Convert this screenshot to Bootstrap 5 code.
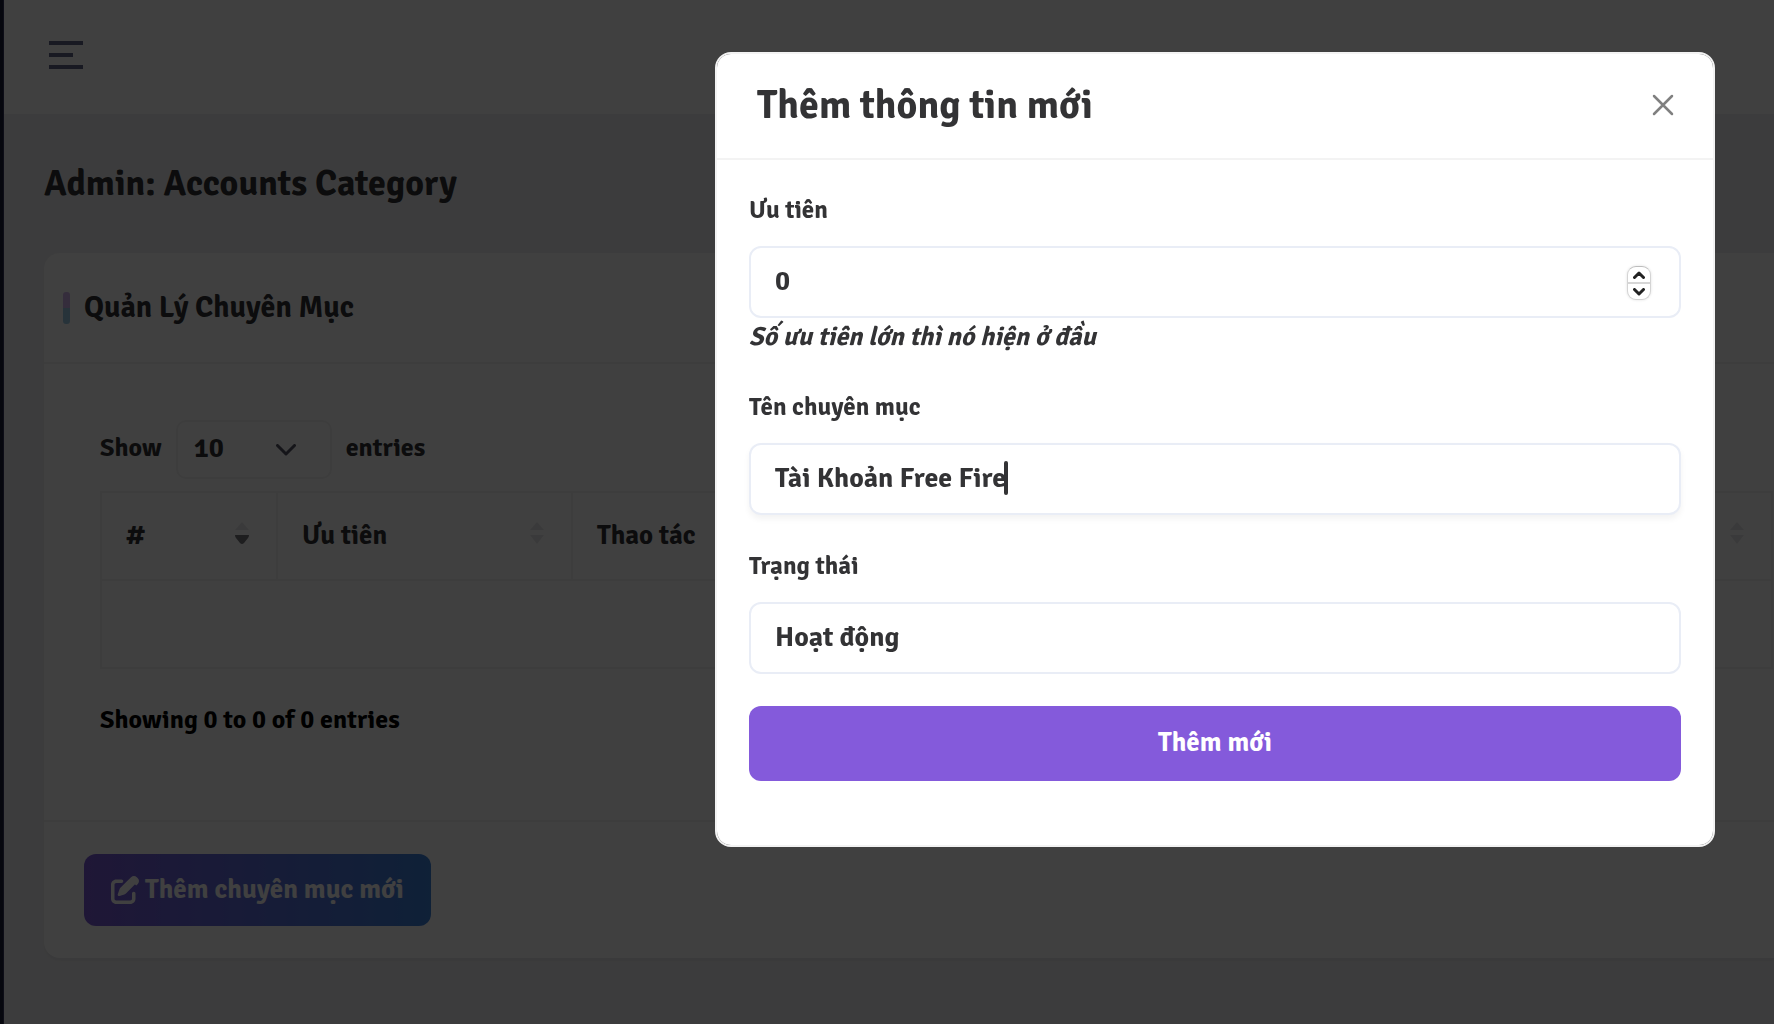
<!DOCTYPE html>
<html lang="vi">
<head>
<meta charset="utf-8">
<meta name="viewport" content="width=device-width, initial-scale=1">
<title>Admin: Accounts Category</title>
<link href="https://cdn.jsdelivr.net/npm/bootstrap@5.3.0/dist/css/bootstrap.min.css" rel="stylesheet">
<style>
  body { font-family: "Signika Negative", Roboto, "Noto Sans", sans-serif; font-size: 26px; font-weight: 700; line-height: 36px; color: #333335; background: #f0f0f2; overflow: hidden; }
  .side-edge { width: 4px; flex: none; background: #1a1c3a; border-right: 1px solid #34365c; }
  .top-bar { height: 114px; background: #fff; padding: 0 0 4px 45px; }
  .burger { border: 0; background: none; padding: 0; line-height: 0; }
  .page-main { padding-left: 40px; }
  .page-title { font-size: 36px; line-height: 43px; font-weight: 700; padding: 48px 0; }
  .panel { border: 0; border-radius: 16px 0 0 16px; box-shadow: 0 3px 2px #e6e6ea; color: inherit; }
  .panel-head { height: 111px; padding-left: 19px; border-bottom: 2px solid #f3f3f3; }
  .accent { width: 7px; height: 32px; border-radius: 3px; background: linear-gradient(#d4b4ee 50%, #9ccbe8 50%); }
  .panel-title { font-size: 30px; line-height: 36px; font-weight: 700; padding-left: 14px; }
  .panel-main { padding: 56px 0 82px 56px; }
  .panel-foot { padding: 32px 40px; border-top: 2px solid #f3f3f3; }
  .length-row { gap: 14px; }
  .length-select { width: 156px; height: 59px; padding: 0 0 4px 16px; border: 2px solid #f3f3f3; border-radius: 10px; font-weight: 700; font-size: 28px; color: inherit;
    background: #fff url("data:image/svg+xml,%3Csvg xmlns='http://www.w3.org/2000/svg' viewBox='0 0 20 12'%3E%3Cpath d='M1.500 1.500 10 10 18.500 1.500' fill='none' stroke='%23555566' stroke-width='3' stroke-linecap='round' stroke-linejoin='round'/%3E%3C/svg%3E") no-repeat right 34px center / 20px 12px; }
  .data-table { width: calc(100% - 1px); margin: 12px 0 0; table-layout: fixed; color: inherit; border: 2px solid #f3f3f3; }
  .data-table th, .data-table td { height: 88px; padding: 0 27px 0 24px; border: 2px solid #f3f3f3; color: inherit; font-size: 27px; font-weight: 700; vertical-align: middle; }
  .col-index { width: 176px; }
  .col-mid { width: 295px; }
  .sorter { width: 14px; height: 22px; margin-bottom: 6px; fill: #e8e8ea; }
  .sorter .active { fill: #77777c; }
  .table-info { padding-top: 33px; background: none; }
  .btn-add { height: 72px; padding: 0 25px; border: 2px solid transparent; border-radius: 12px; font-size: 27px; font-weight: 700; color: #fff; gap: 6px; background: linear-gradient(90deg, #7c5ad8, #3c82dc) border-box; }
  .btn-add svg { width: 28px; height: 28px; fill: currentColor; }

  .modal-backdrop { --bs-backdrop-opacity: .75; }
  .modal-dialog.dialog-wide { max-width: 1000px; margin: 52px 59px 52px auto; }
  .dialog-wide .modal-content { border: 2px solid #f3f3f3; border-radius: 16px; color: #333335; }
  .dialog-wide .modal-header { height: 106px; padding: 0 39px 2px 40px; border-bottom: 2px solid #f3f3f3; }
  .dialog-wide .modal-title { font-size: 40px; line-height: 48px; font-weight: 700; }
  .dialog-wide .modal-body { padding: 31px 32px 64px; }
  .close-x { border: 0; background: none; padding: 0; line-height: 0; }
  .field { margin-bottom: 32px; }
  .field .form-label { display: block; font-size: 25px; font-weight: 700; line-height: 37px; margin: 0 0 18px; }
  .field .form-control, .field .form-select { height: 72px; padding: 0 24px 2px; border: 2px solid #e9edf6; border-radius: 12px; font-size: 28px; font-weight: 700; color: #333335; background: #fff; box-shadow: none; }
  .field .focused { box-shadow: 0 4px 6px rgba(0,0,0,.05); }
  .field input[type=number] { appearance: textfield; }
  .hint { display: block; line-height: 38px; }
  .stepper { right: 30px; top: 20px; width: 24px; height: 34px; border: 1px solid #d4d4d4; border-top-color: #bdbdbd; border-radius: 9px; background: #fff; box-shadow: 0 0 3px rgba(0,0,0,.12); overflow: hidden; }
  .stepper button { flex: 1; border: 0; padding: 0; background: none; line-height: 0; }
  .stepper button + button { border-top: 2px solid #d6d6d6; }
  .caret { left: 255px; top: 18px; width: 4px; height: 34px; border-radius: 2px; background: #333335; }
  .btn-submit { height: 75px; padding: 0; border: 0; border-radius: 12px; background: #845adb; color: #fff; font-size: 27px; font-weight: 700; }
</style>
</head>
<body>
<div class="d-flex min-vh-100">
  <aside class="side-edge"></aside>
  <div class="flex-grow-1">
    <header class="top-bar d-flex align-items-center">
      <button class="burger" type="button" aria-label="Menu">
        <svg width="34" height="28" viewBox="0 0 34 28" fill="#5f6689"><path d="M0 0h34v4H0zM0 12h24v4H0zM0 24h34v4H0z"/></svg>
      </button>
    </header>
    <main class="page-main">
      <h1 class="page-title m-0">Admin: Accounts Category</h1>
      <section class="card panel">
        <div class="panel-head d-flex align-items-center">
          <span class="accent"></span>
          <h2 class="panel-title m-0">Quản Lý Chuyên Mục</h2>
        </div>
        <div class="panel-main">
          <label class="length-row d-flex align-items-center"><span class="pb-1">Show</span>
            <select class="length-select form-select"><option>10</option></select>
            <span class="pb-1">entries</span></label>
          <table class="table data-table">
            <thead>
              <tr>
                <th class="col-index"><div class="d-flex justify-content-between align-items-center">#
                  <svg class="sorter" viewBox="0 0 14 22"><path d="M0 8 7 0l7 8z"/><path class="active" d="M0 13h14q0 2-1 3l-4 5q-2 2-4 0l-4-5q-1-1-1-3z"/></svg></div></th>
                <th class="col-mid"><div class="d-flex justify-content-between align-items-center">Ưu tiên
                  <svg class="sorter" viewBox="0 0 14 22"><path d="M0 8 7 0l7 8zM0 13h14l-7 9z"/></svg></div></th>
                <th><div class="d-flex justify-content-between align-items-center">Thao tác
                  <svg class="sorter" viewBox="0 0 14 22"><path d="M0 8 7 0l7 8zM0 13h14l-7 9z"/></svg></div></th>
              </tr>
            </thead>
            <tbody><tr><td colspan="3"></td></tr></tbody>
          </table>
          <div class="table-info">Showing 0 to 0 of 0 entries</div>
        </div>
        <div class="panel-foot">
          <button class="btn btn-add d-inline-flex align-items-center" type="button">
            <svg viewBox="0 0 512 512"><path d="M472 22c-29-29-76-29-105 0l-30 30 123 123 30-30c29-29 29-76 0-105zM172 217c-8 8-14 18-18 29l-30 89c-3 9-1 18 6 25s16 9 25 6l89-30c11-4 21-10 29-18l167-168L338 50zM96 64c-53 0-96 43-96 96v256c0 53 43 96 96 96h256c53 0 96-43 96-96v-96c0-18-14-32-32-32s-32 14-32 32v96c0 18-14 32-32 32H96c-18 0-32-14-32-32V160c0-18 14-32 32-32h96c18 0 32-14 32-32s-14-32-32-32z"/></svg>
            <span>Thêm chuyên mục mới</span>
          </button>
        </div>
      </section>
    </main>
  </div>
</div>

<div class="modal-backdrop show"></div>
<div class="modal d-block" role="dialog" aria-modal="true" aria-labelledby="dialogTitle">
  <div class="modal-dialog dialog-wide">
    <form class="modal-content">
      <div class="modal-header">
        <h2 class="modal-title" id="dialogTitle">Thêm thông tin mới</h2>
        <button class="close-x" type="button" aria-label="Close">
          <svg width="22" height="22" viewBox="0 0 22 22" fill="none" stroke="#808080" stroke-width="2.500" stroke-linecap="round"><path d="M2 2 20 20M20 2 2 20"/></svg>
        </button>
      </div>
      <div class="modal-body">
        <div class="field">
          <label class="form-label" for="priority">Ưu tiên</label>
          <div class="position-relative">
            <input class="form-control" id="priority" type="number" value="0">
            <div class="stepper position-absolute d-flex flex-column">
              <button type="button" aria-label="+"><svg width="12" height="8" viewBox="0 0 12 8" fill="none" stroke="#222" stroke-width="3" stroke-linecap="round" stroke-linejoin="round"><path d="M1.500 6.500 6 2l4.500 4.500"/></svg></button>
              <button type="button" aria-label="-"><svg width="12" height="8" viewBox="0 0 12 8" fill="none" stroke="#222" stroke-width="3" stroke-linecap="round" stroke-linejoin="round"><path d="M1.500 1.500 6 6l4.500-4.500"/></svg></button>
            </div>
          </div>
          <em class="hint">Số ưu tiên lớn thì nó hiện ở đầu</em>
        </div>
        <div class="field">
          <label class="form-label" for="catName">Tên chuyên mục</label>
          <div class="position-relative">
            <input class="form-control focused" id="catName" type="text" value="Tài Khoản Free Fire">
            <span class="caret position-absolute"></span>
          </div>
        </div>
        <div class="field">
          <label class="form-label" for="state">Trạng thái</label>
          <select class="form-select" id="state"><option>Hoạt động</option></select>
        </div>
        <button class="btn btn-submit w-100" type="button">Thêm mới</button>
      </div>
    </form>
  </div>
</div>
<script src="https://cdn.jsdelivr.net/npm/bootstrap@5.3.0/dist/js/bootstrap.bundle.min.js"></script>
</body>
</html>
